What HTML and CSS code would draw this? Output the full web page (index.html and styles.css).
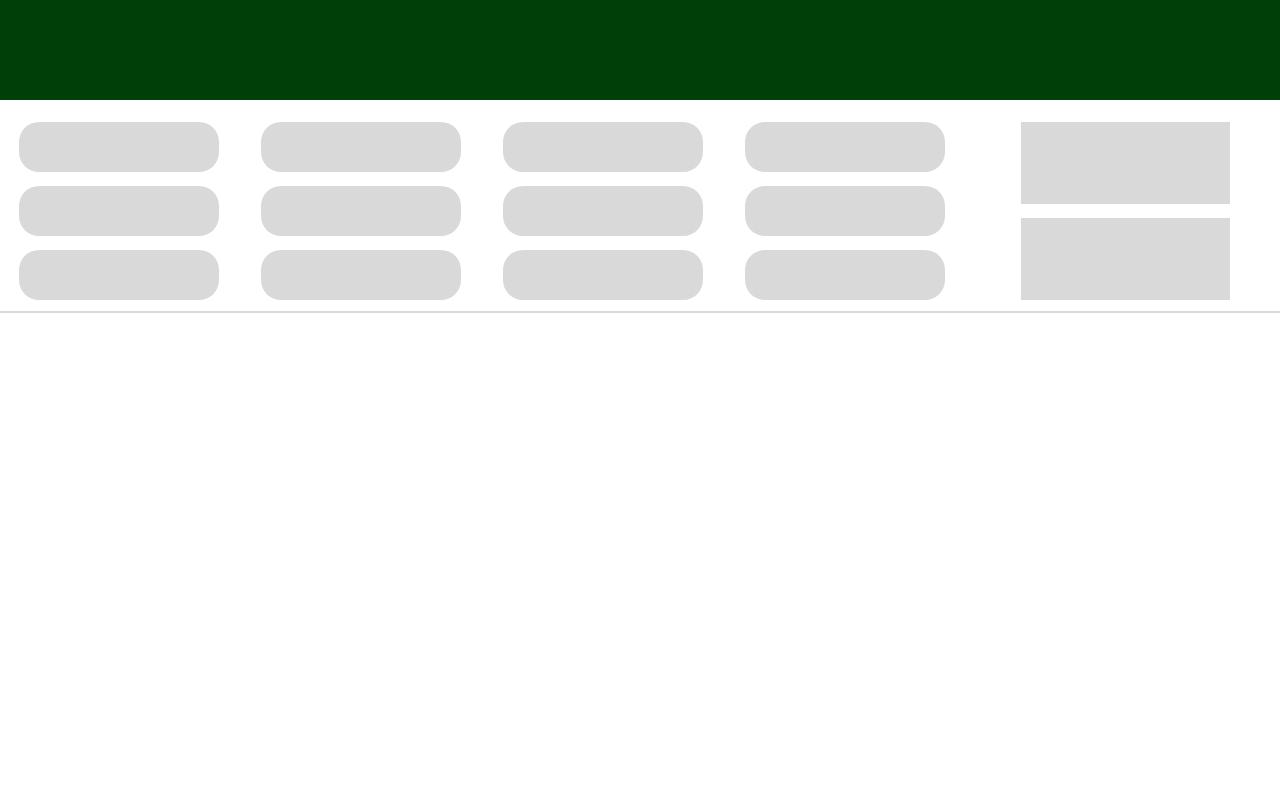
FILE: index.html
```html
<!DOCTYPE html>
<html lang="en">
<head>
<meta charset="utf-8">
<title>Page</title>
<link rel="stylesheet" href="styles.css">
</head>
<body>
<header class="topbar"></header>
<section class="panel">
  <div class="pill-col">
    <div class="pill"></div>
    <div class="pill"></div>
    <div class="pill"></div>
  </div>
  <div class="pill-col">
    <div class="pill"></div>
    <div class="pill"></div>
    <div class="pill"></div>
  </div>
  <div class="pill-col">
    <div class="pill"></div>
    <div class="pill"></div>
    <div class="pill"></div>
  </div>
  <div class="pill-col">
    <div class="pill"></div>
    <div class="pill"></div>
    <div class="pill"></div>
  </div>
  <div class="box-col">
    <div class="box"></div>
    <div class="box"></div>
  </div>
</section>
</body>
</html>
```
FILE: styles.css
```css
html, body {
  margin: 0;
  padding: 0;
  background: #ffffff;
  font-family: "Liberation Sans", Arial, sans-serif;
}

.topbar {
  height: 100px;
  background: #003f08;
}

.panel {
  display: flex;
  padding: 22px 0 11px 19px;
  border-bottom: 2px solid #d9d9d9;
}

.pill-col {
  display: flex;
  flex-direction: column;
  gap: 14px;
  margin-right: 42px;
}

.pill-col:nth-child(4) {
  margin-right: 76px;
}

.pill {
  width: 200px;
  height: 50px;
  border-radius: 20px;
  background: #d9d9d9;
}

.box-col {
  display: flex;
  flex-direction: column;
  gap: 14px;
}

.box {
  width: 209px;
  height: 82px;
  background: #d9d9d9;
}
```
